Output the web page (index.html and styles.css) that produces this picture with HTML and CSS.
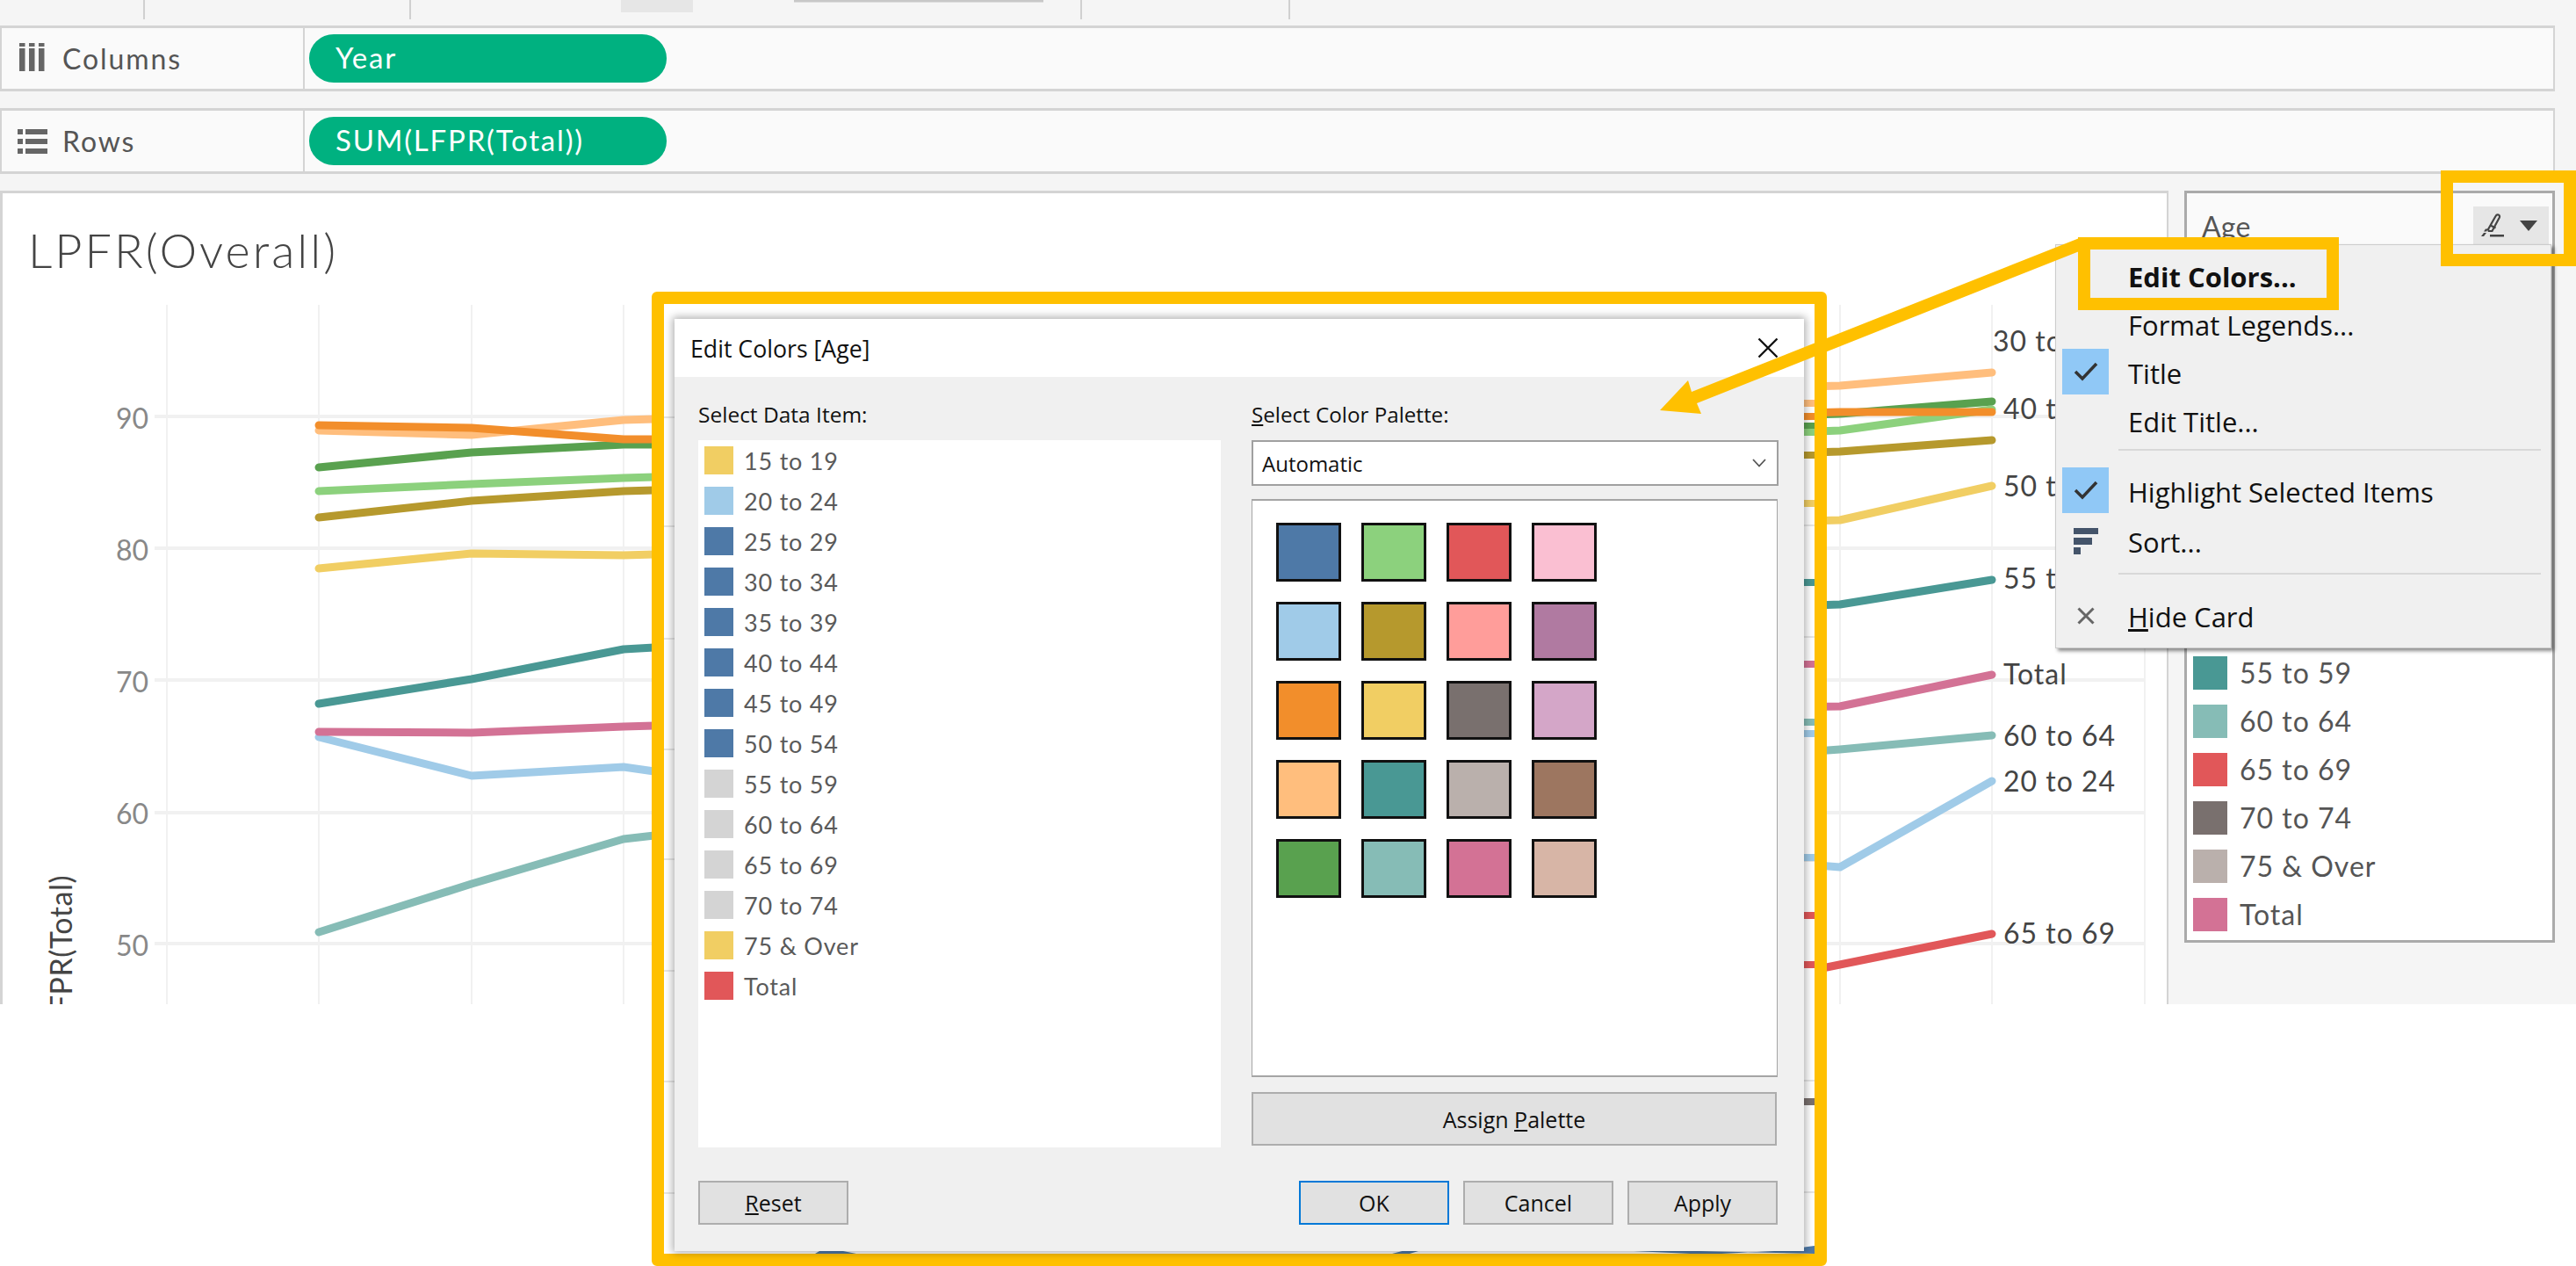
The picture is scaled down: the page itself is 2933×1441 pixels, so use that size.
FILE: index.html
```html
<!DOCTYPE html>
<html lang="en">
<head>
<meta charset="utf-8">
<title>Edit Colors</title>
<link rel="stylesheet" href="styles.css">
</head>
<body>
<div class="page">
  <div class="app">
    <div class="toolbar">
      <span class="tool-div tool-a"></span>
      <span class="tool-div tool-b"></span>
      <span class="tool-block"></span>
      <span class="tool-tab"></span>
      <span class="tool-div tool-c"></span>
      <span class="tool-div tool-d"></span>
    </div>
    <div class="shelf shelf-columns">
      <div class="shelf-label">
        <svg class="shelf-icon" width="36" height="36" viewBox="0 0 36 36"><path class="ic-fill" d="M3 0h6.500v4H3zM3 6h6.500v26H3zM14 0h6.500v4H14zM14 6h6.500v26H14zM25 0h6.500v4H25zM25 6h6.500v26H25z"/></svg>
        <span>Columns</span>
      </div>
      <div class="shelf-body"><div class="pill">Year</div></div>
    </div>
    <div class="shelf shelf-rows">
      <div class="shelf-label">
        <svg class="shelf-icon" width="36" height="36" viewBox="0 0 36 36"><path class="ic-fill" d="M1 4h6v6H1zM10 4h25v6H10zM1 15h6v6H1zM10 15h25v6H10zM1 26h6v6H1zM10 26h25v6H10z"/></svg>
        <span>Rows</span>
      </div>
      <div class="shelf-body"><div class="pill">SUM(LFPR(Total))</div></div>
    </div>
    <div class="workspace">
      <div class="chart">
        <h1 class="chart-title">LPFR(Overall)</h1>
        <svg class="plot" width="2467" height="927" viewBox="0 216 2467 927">
          <g class="grid-v">
            <path d="M190 346V1143M363 346V1143M537 346V1143M710 346V1143M883 346V1143M1056 346V1143M1229 346V1143M1402 346V1143M1575 346V1143M1749 346V1143M1922 346V1143M2095 346V1143M2268 346V1143M2442 346V1143"/>
          </g>
          <g class="grid-h">
            <path d="M176 473H2442M176 623H2442M176 773H2442M176 924H2442M176 1073H2442"/>
          </g>
          <g class="axis-num">
            <text x="169" y="487">90</text>
            <text x="169" y="637">80</text>
            <text x="169" y="787">70</text>
            <text x="169" y="937">60</text>
            <text x="169" y="1087">50</text>
          </g>
          <text class="axis-title" transform="translate(82 995) rotate(-90)" text-anchor="end">LFPR(Total)</text>
          <g class="series">
            <polyline class="s-ltblue" points="363,838 537,882 710,872 745,877 2095,986 2268,888"/>
            <polyline class="s-ltteal" points="363,1060 537,1005 710,954 745,950 2095,852 2268,836"/>
            <polyline class="s-pink" points="363,832 537,833 710,826 745,825 2095,803 2268,767"/>
            <polyline class="s-teal" points="363,800 537,772 710,738 745,736 2095,687 2268,659"/>
            <polyline class="s-red" points="2060,1104 2268,1062"/>
            <polyline class="s-yellow" points="363,646 537,629 710,631 745,630 2095,591 2268,552"/>
            <polyline class="s-olive" points="363,588 537,569 710,558 745,557 2095,513 2268,500"/>
            <polyline class="s-ltgreen" points="363,558 537,550 710,543 745,542 2095,489 2268,465"/>
            <polyline class="s-green" points="363,531 537,514 710,505 745,505 2095,470 2268,456"/>
            <polyline class="s-ltorange" points="363,489 537,494 710,477 745,476 2095,438 2268,423"/>
            <polyline class="s-orange" points="363,483 537,486 710,499 745,499 2095,468 2268,468"/>
          </g>
          <g class="end-label">
            <text x="2269" y="399">30 to 34</text>
            <text x="2281" y="476">40 to 44</text>
            <text x="2281" y="564">50 to 54</text>
            <text x="2281" y="669">55 to 59</text>
            <text x="2281" y="778">Total</text>
            <text x="2281" y="848">60 to 64</text>
            <text x="2281" y="900">20 to 24</text>
            <text x="2281" y="1073">65 to 69</text>
          </g>
        </svg>
      </div>
      <aside class="legend">
        <div class="legend-head">
          <span class="legend-title">Age</span>
          <span class="legend-btn">
            <svg width="30" height="30" viewBox="0 0 30 30"><path class="ic-line" d="M10 19 18.500 4c.8-1.500 2-2 3.200-1.500s1.700 1.800 1 3.300L14.500 21l-3.800 0z"/><path class="ic-line" d="M12.500 14.500l6 3"/><path class="ic-fill-dark" d="M12 25h16v2.500H12zM5 23h3l-3 4H2zM7 18.500h3l-2 3H5z"/></svg>
            <svg width="20" height="12" viewBox="0 0 20 12"><path class="ic-fill-dark" d="M0 0h20L10 12z"/></svg>
          </span>
        </div>
        <ul class="legend-list">
          <li class="legend-item"><i class="sw b-blue"></i>15 to 19</li>
          <li class="legend-item"><i class="sw b-ltblue"></i>20 to 24</li>
          <li class="legend-item"><i class="sw b-orange"></i>25 to 29</li>
          <li class="legend-item"><i class="sw b-ltorange"></i>30 to 34</li>
          <li class="legend-item"><i class="sw b-green"></i>35 to 39</li>
          <li class="legend-item"><i class="sw b-ltgreen"></i>40 to 44</li>
          <li class="legend-item"><i class="sw b-olive"></i>45 to 49</li>
          <li class="legend-item"><i class="sw b-yellow"></i>50 to 54</li>
          <li class="legend-item"><i class="sw b-teal"></i>55 to 59</li>
          <li class="legend-item"><i class="sw b-ltteal"></i>60 to 64</li>
          <li class="legend-item"><i class="sw b-red"></i>65 to 69</li>
          <li class="legend-item"><i class="sw b-gray"></i>70 to 74</li>
          <li class="legend-item"><i class="sw b-tan"></i>75 &amp; Over</li>
          <li class="legend-item"><i class="sw b-pink"></i>Total</li>
        </ul>
      </aside>
    </div>
  </div>

  <div class="frame">
    <svg class="slivers" width="1310" height="1081" viewBox="756 346 1310 1081">
      <path class="sl-grid" d="M756 475H770M756 599H770M756 727H770M756 853H770M756 978H770M756 1105H770M756 1231H770M756 1358H770M2050 598H2066M2050 725H2066M2050 980H2066M2050 1230H2066M2050 1357H2066"/>
      <path class="sl-h s-ltorange" d="M2040 459H2066"/>
      <path class="sl-h s-orange" d="M2040 474H2066"/>
      <path class="sl-h s-green" d="M2040 485H2066"/>
      <path class="sl-h s-ltgreen" d="M2040 492H2066"/>
      <path class="sl-h s-olive" d="M2040 518H2066"/>
      <path class="sl-h s-yellow" d="M2040 573H2066"/>
      <path class="sl-h s-teal" d="M2040 663H2066"/>
      <path class="sl-h s-pink" d="M2040 756H2066"/>
      <path class="sl-h s-ltteal" d="M2040 822H2066"/>
      <path class="sl-h s-ltblue" d="M2040 835H2066"/>
      <path class="sl-h s-ltblue" d="M2040 976H2066"/>
      <path class="sl-h s-red" d="M2040 1042H2066"/>
      <path class="sl-h s-red" d="M2040 1098H2066"/>
      <path class="sl-h s-gray" d="M2040 1254H2066"/>
      <path class="sl-blue" d="M928 1427 938 1421 950 1422 975 1427ZM1585 1427 1608 1421 1625 1421 1605 1427ZM1802 1421 1860 1424 1925 1427 1960 1427 2020 1424 2066 1418V1427Z"/>
    </svg>
    <div class="dialog">
      <div class="dlg-title">
        <span>Edit Colors [Age]</span>
        <svg class="dlg-close" width="24" height="24" viewBox="0 0 24 24"><path class="ic-x" d="M1.500 1.500 22.500 22.500M22.500 1.500 1.500 22.500"/></svg>
      </div>
      <div class="dlg-body">
        <div class="dlg-cols">
          <div class="dlg-col">
            <div class="dlg-label dlg-label-strong">Select Data Item:</div>
            <ul class="data-list">
              <li class="data-item"><i class="dsw b-yellow"></i>15 to 19</li>
              <li class="data-item"><i class="dsw b-ltblue"></i>20 to 24</li>
              <li class="data-item"><i class="dsw b-blue"></i>25 to 29</li>
              <li class="data-item"><i class="dsw b-blue"></i>30 to 34</li>
              <li class="data-item"><i class="dsw b-blue"></i>35 to 39</li>
              <li class="data-item"><i class="dsw b-blue"></i>40 to 44</li>
              <li class="data-item"><i class="dsw b-blue"></i>45 to 49</li>
              <li class="data-item"><i class="dsw b-blue"></i>50 to 54</li>
              <li class="data-item"><i class="dsw b-none"></i>55 to 59</li>
              <li class="data-item"><i class="dsw b-none"></i>60 to 64</li>
              <li class="data-item"><i class="dsw b-none"></i>65 to 69</li>
              <li class="data-item"><i class="dsw b-none"></i>70 to 74</li>
              <li class="data-item"><i class="dsw b-yellow"></i>75 &amp; Over</li>
              <li class="data-item"><i class="dsw b-red"></i>Total</li>
            </ul>
          </div>
          <div class="dlg-col">
            <div class="dlg-label"><u>S</u>elect Color Palette:</div>
            <div class="select">
              <span>Automatic</span>
              <svg width="16" height="10" viewBox="0 0 16 10"><path class="ic-chev" d="M1 1l7 7.500L15 1"/></svg>
            </div>
            <div class="palette">
              <i class="pal b-blue"></i><i class="pal b-ltgreen"></i><i class="pal b-red"></i><i class="pal b-ltpink"></i>
              <i class="pal b-ltblue"></i><i class="pal b-olive"></i><i class="pal b-salmon"></i><i class="pal b-purple"></i>
              <i class="pal b-orange"></i><i class="pal b-yellow"></i><i class="pal b-gray"></i><i class="pal b-ltpurple"></i>
              <i class="pal b-ltorange"></i><i class="pal b-teal"></i><i class="pal b-tan"></i><i class="pal b-brown"></i>
              <i class="pal b-green"></i><i class="pal b-ltteal"></i><i class="pal b-pink"></i><i class="pal b-ltbrown"></i>
            </div>
            <div class="btn btn-assign"><span>Assign <u>P</u>alette</span></div>
          </div>
        </div>
        <div class="dlg-foot">
          <div class="btn btn-foot"><span><u>R</u>eset</span></div>
          <div class="foot-right">
            <div class="btn btn-foot btn-ok">OK</div>
            <div class="btn btn-foot">Cancel</div>
            <div class="btn btn-foot">Apply</div>
          </div>
        </div>
      </div>
    </div>
  </div>

  <div class="menu">
    <div class="menu-row menu-strong"><span class="menu-ic"></span><span>Edit Colors...</span></div>
    <div class="menu-row"><span class="menu-ic"></span><span>Format Legends...</span></div>
    <div class="menu-row"><span class="menu-ic menu-check"><svg width="28" height="22" viewBox="0 0 28 22"><path class="ic-check" d="M2 11l8 8L26 2"/></svg></span><span>Title</span></div>
    <div class="menu-row"><span class="menu-ic"></span><span>Edit Title...</span></div>
    <div class="menu-sep sep-a"></div>
    <div class="menu-row"><span class="menu-ic menu-check"><svg width="28" height="22" viewBox="0 0 28 22"><path class="ic-check" d="M2 11l8 8L26 2"/></svg></span><span>Highlight Selected Items</span></div>
    <div class="menu-row row-sort"><span class="menu-ic menu-glyph"><svg width="28" height="30" viewBox="0 0 28 30"><path class="ic-sort" d="M0 0h28v7H0zM0 11h21v8H0zM0 22h8v8H0z"/></svg></span><span>Sort...</span></div>
    <div class="menu-sep sep-b"></div>
    <div class="menu-row"><span class="menu-ic menu-glyph"><svg width="20" height="20" viewBox="0 0 20 20"><path class="ic-hide" d="M1.500 1.500l17 17M18.500 1.500l-17 17"/></svg></span><span><u>H</u>ide Card</span></div>
  </div>

  <svg class="arrow" width="500" height="210" viewBox="1880 265 500 210"><path class="arrow-fill" d="M1890 467 1922 433 1926 446 2370 270V285L1932 459 1937 471Z"/></svg>
  <div class="callout callout-btn"></div>
  <div class="callout callout-item"></div>
</div>
</body>
</html>
```

FILE: styles.css
```css
* { box-sizing: border-box; }
html, body { margin: 0; padding: 0; background: #fff; }
ul { list-style: none; margin: 0; padding: 0; }
i { display: block; }
.page { position: relative; width: 2933px; height: 1441px; overflow: hidden; font-family: "Lato", sans-serif; }
.app { width: 2933px; height: 1143px; background: #f5f5f5; overflow: hidden; }

/* toolbar */
.toolbar { position: relative; height: 29px; }
.tool-div { position: absolute; top: 0; width: 2px; height: 22px; background: #d0d0d0; }
.tool-a { left: 163px; }
.tool-b { left: 466px; }
.tool-c { left: 1230px; }
.tool-d { left: 1467px; }
.tool-block { position: absolute; left: 707px; top: 0; width: 82px; height: 14px; background: #e6e6e6; }
.tool-tab { position: absolute; left: 904px; top: 0; width: 284px; height: 3px; background: #c8c8c8; border-bottom: 1px solid #ddd; }

/* shelves */
.shelf { display: flex; width: 2909px; height: 75px; background: #fafafa; border: solid #d4d4d4; border-width: 3px 2px; }
.shelf-rows { margin-top: 19px; }
.shelf-label { display: flex; align-items: center; width: 345px; flex: none; border-right: 2px solid #d4d4d4; font-size: 32px; letter-spacing: 1.9px; color: #555; }
.shelf-icon { margin: 0 16px 0 17px; flex: none; }
.ic-fill { fill: #666; }
.shelf-body { flex: 1; display: flex; align-items: center; padding-left: 5px; }
.pill { width: 407px; height: 55px; border-radius: 28px / 27px; background: #00b180; color: #fff; font-size: 33px; letter-spacing: 1.8px; line-height: 53px; padding-left: 30px; }

/* workspace */
.workspace { display: flex; margin-top: 19px; height: 927px; }
.chart { position: relative; width: 2469px; height: 927px; background: #fff; border: solid #d4d4d4; border-width: 3px 2px 0 3px; flex: none; }
.chart-title { margin: 0; padding: 32px 0 0 29px; font-size: 54px; line-height: 66px; font-weight: 300; color: #444; letter-spacing: 3px; }
.plot { position: absolute; left: -3px; top: -3px; }
.grid-v path { fill: none; stroke: #f1f1f1; stroke-width: 2; }
.grid-h path { fill: none; stroke: #f1f1f1; stroke-width: 4; }
.axis-num text { font-family: "Lato", sans-serif; font-size: 32px; fill: #888; text-anchor: end; }
.axis-title { font-family: "Lato", sans-serif; font-size: 34px; fill: #444; letter-spacing: .5px; }
.series polyline { fill: none; stroke-width: 9; stroke-linejoin: round; stroke-linecap: round; }
.end-label text { font-family: "Lato", sans-serif; font-size: 32px; fill: #444; letter-spacing: 1px; }
.s-ltblue { stroke: #a0cbe8; }
.s-ltteal { stroke: #86bcb6; }
.s-pink { stroke: #d37295; }
.s-teal { stroke: #499894; }
.s-red { stroke: #e15759; }
.s-yellow { stroke: #f1ce63; }
.s-olive { stroke: #b6992d; }
.s-ltgreen { stroke: #8cd17d; }
.s-green { stroke: #59a14f; }
.s-ltorange { stroke: #ffbe7d; }
.s-orange { stroke: #f28e2b; }
.s-gray { stroke: #79706e; }

/* legend */
.legend { width: 422px; height: 856px; margin-left: 18px; background: #fff; border: 3px solid #aaa; flex: none; }
.legend-head { position: relative; height: 59px; background: #fafafa; padding: 18px 0 0 17px; }
.legend-title { font-size: 32px; line-height: 40px; color: #555; letter-spacing: .2px; display: block; }
.legend-btn { position: absolute; left: 326px; top: 15px; width: 86px; height: 44px; background: #e6e6e6; display: flex; align-items: center; gap: 16px; padding-left: 7px; }
.ic-line { fill: none; stroke: #444; stroke-width: 2.200; }
.ic-fill-dark { fill: #444; }
.legend-list { padding: 19px 0 0 7px; }
.legend-item { display: flex; align-items: center; height: 55px; font-size: 32px; letter-spacing: 1px; color: #555; }
.sw { width: 39px; height: 38px; margin-right: 14px; flex: none; }
.b-blue { background: #4e79a7; }
.b-ltblue { background: #a0cbe8; }
.b-orange { background: #f28e2b; }
.b-ltorange { background: #ffbe7d; }
.b-green { background: #59a14f; }
.b-ltgreen { background: #8cd17d; }
.b-olive { background: #b6992d; }
.b-yellow { background: #f1ce63; }
.b-teal { background: #499894; }
.b-ltteal { background: #86bcb6; }
.b-red { background: #e15759; }
.b-gray { background: #79706e; }
.b-tan { background: #bab0ac; }
.b-pink { background: #d37295; }
.b-ltpink { background: #fabfd2; }
.b-salmon { background: #ff9d9a; }
.b-purple { background: #b07aa1; }
.b-ltpurple { background: #d4a6c8; }
.b-brown { background: #9d7660; }
.b-ltbrown { background: #d7b5a6; }
.b-none { background: #d4d4d4; }

/* yellow frame with the dialog */
.frame { position: absolute; left: 742px; top: 332px; width: 1338px; height: 1109px; border: 14px solid #ffc000; border-radius: 6px; background: #fff; padding: 17px 12px 3px 12px; }
.slivers { position: absolute; left: 0; top: 0; }
.sl-grid { fill: none; stroke: #e6e6e6; stroke-width: 2; }
.sl-h { fill: none; stroke-width: 8; }
.sl-blue { fill: #4e79a7; }
.dialog { position: relative; height: 1061px; display: flex; flex-direction: column; background: #f0f0f0; box-shadow: 0 0 9px 2px rgba(0,0,0,.32); font-family: "Open Sans", sans-serif; font-size: 25px; color: #111; }
.dlg-title { height: 66px; background: #fff; display: flex; align-items: center; justify-content: space-between; padding: 0 29px 0 18px; flex: none; font-size: 26.700px; }
.ic-x { fill: none; stroke: #111; stroke-width: 2.400; }
.dlg-body { flex: 1; padding: 0 29px 0 27px; display: flex; flex-direction: column; }
.dlg-cols { display: grid; grid-template-columns: 595px 600px; column-gap: 35px; height: 877px; }
.dlg-label { height: 30px; line-height: 30px; margin: 28px 0 14px; font-size: 24.200px; }
.dlg-label-strong { font-size: 24.500px; font-weight: 500; }
.data-list { height: 805px; background: #fff; padding: 0 0 0 7px; }
.data-item { display: flex; align-items: center; height: 46px; font-family: "Lato", sans-serif; font-weight: 400; font-size: 27px; letter-spacing: .8px; color: #5a5a5a; }
.dsw { width: 33px; height: 32px; margin-right: 12px; flex: none; }
.select { height: 52px; background: #fff; border: 2px solid #a0a0a0; display: flex; align-items: center; justify-content: space-between; padding: 0 12px 0 10px; font-size: 24px; }
.ic-chev { fill: none; stroke: #555; stroke-width: 1.800; }
.palette { height: 658px; margin-top: 15px; width: 599px; background: #fff; border: 2px solid #a5a5a5; border-width: 2px 1px 2px 1px; padding: 25px 0 0 27px; display: grid; grid-template-columns: repeat(4, 74px); grid-auto-rows: 67px; gap: 23px; align-content: start; }
.pal { border: 3px solid #111; }
.btn { display: flex; align-items: center; justify-content: center; background: #e1e1e1; border: 2px solid #adadad; color: #111; }
.btn-assign { height: 61px; margin-top: 17px; width: 598px; }
.dlg-foot { display: flex; justify-content: space-between; margin-top: 38px; padding-right: 1px; }
.btn-foot { width: 171px; height: 50px; flex: none; }
.foot-right { display: flex; gap: 16px; }
.btn-ok { border-color: #0078d7; }

/* context menu */
.menu { position: absolute; left: 2340px; top: 278px; width: 565px; height: 460px; background: #f0f0f0; border: 1px solid #ccc; box-shadow: 3px 3px 4px rgba(0,0,0,.45); padding-top: 8px; font-family: "Open Sans", sans-serif; font-size: 31px; color: #111; }
.menu-row { display: flex; align-items: center; height: 55px; }
.menu-strong { font-weight: 700; }
.menu-ic { width: 53px; height: 52px; margin: 0 22px 0 7px; flex: none; display: flex; align-items: center; justify-content: center; }
.menu-check { background: #90c8f6; position: relative; top: -2px; }
.menu-glyph { position: relative; top: -1px; }
.ic-check { fill: none; stroke: #333; stroke-width: 3.500; }
.ic-sort { fill: #44546a; }
.ic-hide { fill: none; stroke: #666; stroke-width: 3; }
.menu-sep { height: 2px; margin-left: 71px; margin-right: 11px; background: #d8d8d8; }
.sep-a { margin-top: 4px; margin-bottom: 19px; }
.row-sort { margin-top: 2px; }
.sep-b { margin-top: 8px; margin-bottom: 20px; }

/* callouts */
.arrow { position: absolute; left: 1880px; top: 265px; }
.arrow-fill { fill: #ffc000; }
.callout { position: absolute; border: 14px solid #ffc000; }
.callout-btn { left: 2779px; top: 194px; width: 154px; height: 109px; }
.callout-item { left: 2366px; top: 270px; width: 297px; height: 83px; }
```
